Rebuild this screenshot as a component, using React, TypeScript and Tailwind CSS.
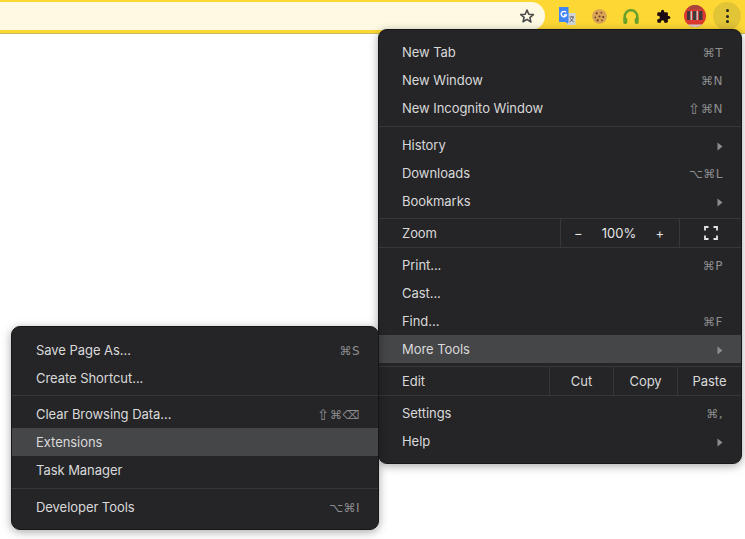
import React from "react";

const FONT = "font-['Inter','Liberation_Sans','DejaVu_Sans',sans-serif]";

function Tri() {
  return (
    <svg width="6" height="9" viewBox="0 0 6 9" className="block">
      <path d="M0.500 0.500 L5.500 4.500 L0.500 8.500 Z" fill="#8c8d8f" />
    </svg>
  );
}

function Keys({ shift, text }: { shift?: boolean; text: string }) {
  return (
    <span className="flex items-center font-['DejaVu_Sans',sans-serif] text-[12px] tracking-[0.5px] text-[#8d8e90]">
      {shift && <span className="text-[15px] leading-none">⇧</span>}
      <span>{text}</span>
    </span>
  );
}

function Row({ label, shortcut, shift, arrow, active, indent = "pl-[23px]", right = "pr-[18px]" }: { label: string; shortcut?: string; shift?: boolean; arrow?: boolean; active?: boolean; indent?: string; right?: string }) {
  return (
    <div className={`flex h-7 items-center justify-between pt-[2px] ${indent} ${right} ${active ? "bg-[#454648]" : ""}`}>
      <span className="text-[13px] tracking-[-0.05px] text-[#d9d9da]">{label}</span>
      {shortcut && <Keys shift={shift} text={shortcut} />}
      {arrow && <Tri />}
    </div>
  );
}

function Sep({ className = "" }: { className?: string }) {
  return <div className={`h-px bg-[#36373a] ${className}`} />;
}

function Translate() {
  return (
    <svg width="17" height="18" viewBox="0 0 17 18">
      <path d="M8 6h8.500v12H8z" fill="#cfd4d6" />
      <path d="M10.500 10h4.500M12.700 9v1M14.300 10c-.4 2.200-1.700 3.700-3.600 4.700M11.500 11.500c.6 1.300 1.600 2.400 3.200 3.200" stroke="#5f6368" strokeWidth="1" fill="none" />
      <path d="M0 0h9.500v15l-1 1.500-2-1.500H0z" fill="#4285f4" />
      <path d="M7 5.400A2.700 2.700 0 1 0 7.400 8H4.800" fill="none" stroke="#fff" strokeWidth="1.300" />
    </svg>
  );
}

function Cookie() {
  return (
    <svg width="15" height="15" viewBox="0 0 16 16">
      <circle cx="8" cy="8" r="7.800" fill="#d9a256" />
      <circle cx="5" cy="4.500" r="1.100" fill="#5c3a1e" />
      <circle cx="10" cy="4" r="0.900" fill="#5c3a1e" />
      <circle cx="8" cy="8" r="1.100" fill="#6b4423" />
      <circle cx="3.500" cy="9" r="0.900" fill="#6b4423" />
      <circle cx="12" cy="8.500" r="1.100" fill="#5c3a1e" />
      <circle cx="6" cy="12" r="1.100" fill="#5c3a1e" />
      <circle cx="10.500" cy="12" r="0.900" fill="#6b4423" />
    </svg>
  );
}

function Headphones() {
  return (
    <svg width="16" height="15" viewBox="0 0 16 15">
      <path d="M1.700 10V7.500a6.300 6.300 0 0 1 12.600 0V10" fill="none" stroke="#6aa02c" strokeWidth="2.600" />
      <rect x="0.300" y="8.500" width="4" height="6.500" rx="1.800" fill="#6aa02c" />
      <rect x="11.700" y="8.500" width="4" height="6.500" rx="1.800" fill="#6aa02c" />
    </svg>
  );
}

function Puzzle() {
  return (
    <svg width="15" height="15" viewBox="0 0 24 24">
      <path d="M20.500 11H19V7a2 2 0 0 0-2-2h-4V3.500a2.500 2.500 0 0 0-5 0V5H4a2 2 0 0 0-2 2v3.800h1.500a2.700 2.700 0 0 1 0 5.400H2V20a2 2 0 0 0 2 2h3.800v-1.500a2.700 2.700 0 0 1 5.400 0V22H17a2 2 0 0 0 2-2v-4h1.500a2.500 2.500 0 0 0 0-5z" fill="#1d0a12" />
    </svg>
  );
}

function Avatar() {
  return (
    <svg width="22" height="22" viewBox="0 0 22 22">
      <circle cx="11" cy="11" r="11" fill="#dc3a30" />
      <path d="M3 4.500h16C17 1.500 14 0 11 0S5 1.500 3 4.500z" fill="#a8443e" />
      <rect x="3" y="6" width="3.500" height="9" fill="#3f393b" />
      <rect x="6.500" y="6" width="1.500" height="9" fill="#c9c2c0" />
      <rect x="9" y="6" width="3.500" height="9" fill="#3f393b" />
      <rect x="12.500" y="6" width="1.500" height="9" fill="#c9c2c0" />
      <rect x="15" y="6" width="3.500" height="9" fill="#3f393b" />
      <path d="M3.500 19.500h15c-2 1.700-4.800 2.500-7.500 2.500s-5.500-.8-7.500-2.500z" fill="#d8cfcb" />
    </svg>
  );
}

function Star() {
  return (
    <svg width="16" height="16" viewBox="0 0 24 24">
      <path d="M12 3l2.700 6.300 6.800.6-5.200 4.500 1.600 6.700L12 17l-5.900 3.600 1.600-6.700L2.500 9.900l6.800-.6z" fill="none" stroke="#4a4a4a" strokeWidth="2.400" strokeLinejoin="round" />
    </svg>
  );
}

function ToolIcon({ children }: { children: React.ReactNode }) {
  return <div className="flex h-7 w-8 items-center justify-center">{children}</div>;
}

function Fullscreen() {
  return (
    <svg width="14" height="14" viewBox="0 0 14 14">
      <path d="M1 4.500V1h3.500M9.500 1H13v3.500M1 9.500V13h3.500M9.500 13H13V9.500" fill="none" stroke="#e4e4e5" strokeWidth="1.800" />
    </svg>
  );
}

export default function App() {
  return (
    <div className={`relative h-[539px] w-[745px] overflow-hidden bg-white ${FONT}`}>
      <div className="flex h-[34px] items-start border-b border-[#c9b75a] bg-[#fdd835] pt-[2px]">
        <div className="flex h-[28px] w-[545px] items-center justify-end rounded-r-full bg-[#fdf9e3] pr-[10px]">
          <Star />
        </div>
        <div className="ml-[6px] flex items-center">
          <ToolIcon><Translate /></ToolIcon>
          <ToolIcon><Cookie /></ToolIcon>
          <ToolIcon><Headphones /></ToolIcon>
          <ToolIcon><Puzzle /></ToolIcon>
          <ToolIcon><Avatar /></ToolIcon>
          <ToolIcon>
            <div className="flex h-7 w-7 flex-col items-center justify-center gap-[2.500px] rounded-full bg-[#e2c437]">
              <span className="h-[3px] w-[3px] rounded-full bg-[#222]" />
              <span className="h-[3px] w-[3px] rounded-full bg-[#222]" />
              <span className="h-[3px] w-[3px] rounded-full bg-[#222]" />
            </div>
          </ToolIcon>
        </div>
      </div>

      {/* Main Chrome menu */}
      <div className="absolute left-[378px] top-[29px] w-[364px] rounded-[9px] border border-[#17171a] bg-[#252527] pb-2 pt-2 shadow-[0_2px_10px_rgba(0,0,0,0.35)]">
        <Row label="New Tab" shortcut="⌘T" />
        <Row label="New Window" shortcut="⌘N" />
        <Row label="New Incognito Window" shortcut="⌘N" shift />
        <Sep className="mb-1 mt-1" />
        <Row label="History" arrow />
        <Row label="Downloads" shortcut="⌥⌘L" />
        <Row label="Bookmarks" arrow />
        <Sep className="mt-[3px]" />
        <div className="flex h-7 items-center">
          <span className="w-[181px] pl-[23px] pt-[2px] text-[13px] tracking-[-0.05px] text-[#d9d9da]">Zoom</span>
          <div className="flex h-full w-[119px] items-center justify-between border-l border-[#36373a] pl-[13px] pr-[15px] pt-[2px] text-[13px] text-[#e4e4e5]">
            <span>−</span>
            <span>100%</span>
            <span>+</span>
          </div>
          <div className="flex h-full flex-1 items-center justify-center border-l border-[#36373a]">
            <Fullscreen />
          </div>
        </div>
        <Sep className="mb-[3px]" />
        <Row label="Print..." shortcut="⌘P" />
        <Row label="Cast..." />
        <Row label="Find..." shortcut="⌘F" />
        <Row label="More Tools" arrow active />
        <Sep className="mt-[3px]" />
        <div className="flex h-7 items-center text-[13px] tracking-[-0.05px] text-[#d9d9da]">
          <span className="w-[170px] pl-[23px] pt-[2px]">Edit</span>
          <span className="flex h-full w-16 items-center justify-center border-l border-[#36373a] pt-[2px]">Cut</span>
          <span className="flex h-full w-16 items-center justify-center border-l border-[#36373a] pt-[2px]">Copy</span>
          <span className="flex h-full flex-1 items-center justify-center border-l border-[#36373a] pt-[2px]">Paste</span>
        </div>
        <Sep className="mb-[3px]" />
        <Row label="Settings" shortcut="⌘," />
        <Row label="Help" arrow />
      </div>

      {/* More Tools submenu */}
      <div className="absolute left-[11px] top-[326px] w-[368px] rounded-[9px] border border-[#17171a] bg-[#252527] pb-2 pt-[9px] shadow-[0_2px_10px_rgba(0,0,0,0.35)]">
        <Row label="Save Page As..." shortcut="⌘S" indent="pl-6" />
        <Row label="Create Shortcut..." indent="pl-6" />
        <Sep className="mb-1 mt-[3px]" />
        <Row label="Clear Browsing Data..." shortcut="⌘⌫" shift indent="pl-6" />
        <Row label="Extensions" active indent="pl-6" />
        <Row label="Task Manager" indent="pl-6" />
        <Sep className="mb-1 mt-1" />
        <Row label="Developer Tools" shortcut="⌥⌘I" indent="pl-6" />
      </div>
    </div>
  );
}
